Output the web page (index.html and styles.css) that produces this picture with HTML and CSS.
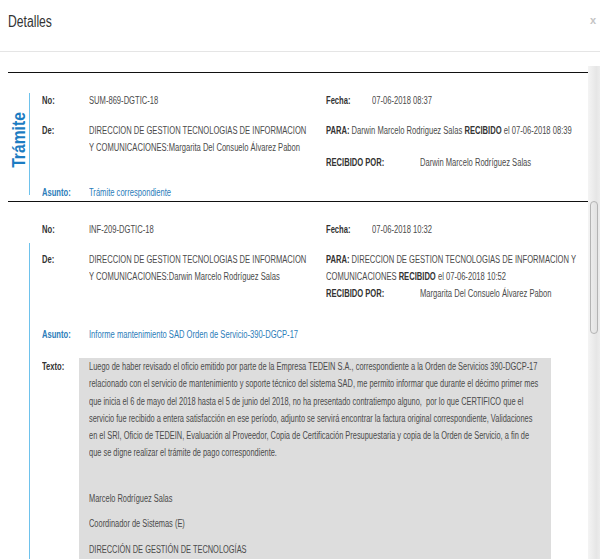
FILE: index.html
```html
<!DOCTYPE html>
<html lang="es">
<head>
<meta charset="utf-8">
<title>Detalles</title>
<link rel="stylesheet" href="styles.css">
</head>
<body>
<div class="modal">
  <header class="modal-header">
    <h4 class="modal-title">Detalles</h4>
    <button class="close" type="button">x</button>
  </header>
  <div class="modal-body">
    <div class="scroll-content">
      <section class="tramite tramite-first">
        <div class="side side-first"><span class="vlabel">Trámite</span></div>
        <div class="fields">
          <div class="cols">
            <div class="col-left">
              <div class="row"><span class="lbl">No:</span><span class="val">SUM-869-DGTIC-18</span></div>
              <div class="row"><span class="lbl">De:</span><span class="val">DIRECCION DE GESTION TECNOLOGIAS DE INFORMACION<br>Y COMUNICACIONES:Margarita Del Consuelo Álvarez Pabon</span></div>
            </div>
            <div class="col-right">
              <div class="row"><span class="lbl-r">Fecha:</span><span class="val">07-06-2018 08:37</span></div>
              <div class="row row-para"><span class="val"><b>PARA:</b> Darwin Marcelo Rodriguez Salas <b>RECIBIDO</b> el 07-06-2018 08:39</span></div>
              <div class="row"><span class="lbl-rp">RECIBIDO POR:</span><span class="val">Darwin Marcelo Rodríguez Salas</span></div>
            </div>
          </div>
          <div class="row asunto asunto-first"><span class="lbl">Asunto:</span><span class="val">Trámite correspondiente</span></div>
        </div>
      </section>
      <section class="tramite tramite-second">
        <div class="side side-second"></div>
        <div class="fields">
          <div class="cols">
            <div class="col-left">
              <div class="row"><span class="lbl">No:</span><span class="val">INF-209-DGTIC-18</span></div>
              <div class="row"><span class="lbl">De:</span><span class="val">DIRECCION DE GESTION TECNOLOGIAS DE INFORMACION<br>Y COMUNICACIONES:Darwin Marcelo Rodríguez Salas</span></div>
            </div>
            <div class="col-right">
              <div class="row"><span class="lbl-r">Fecha:</span><span class="val">07-06-2018 10:32</span></div>
              <div class="row row-para"><span class="val"><b>PARA:</b> DIRECCION DE GESTION TECNOLOGIAS DE INFORMACION Y<br>COMUNICACIONES <b>RECIBIDO</b> el 07-06-2018 10:52</span></div>
              <div class="row"><span class="lbl-rp">RECIBIDO POR:</span><span class="val">Margarita Del Consuelo Álvarez Pabon</span></div>
            </div>
          </div>
          <div class="row asunto asunto-second"><span class="lbl">Asunto:</span><span class="val">Informe mantenimiento SAD Orden de Servicio-390-DGCP-17</span></div>
          <div class="texto-row">
            <span class="lbl-t">Texto:</span>
            <div class="texto-box">
              <p class="p-main">Luego de haber revisado el oficio emitido por parte de la Empresa TEDEIN S.A., correspondiente a la Orden de Servicios 390-DGCP-17<br>relacionado con el servicio de mantenimiento y soporte técnico del sistema SAD, me permito informar que durante el décimo primer mes<br>que inicia el 6 de mayo del 2018 hasta el 5 de junio del 2018, no ha presentado contratiempo alguno,&nbsp; por lo que CERTIFICO que el<br>servicio fue recibido a entera satisfacción en ese período, adjunto se servirá encontrar la factura original correspondiente, Validaciones<br>en el SRI, Oficio de TEDEIN, Evaluación al Proveedor, Copia de Certificación Presupuestaria y copia de la Orden de Servicio, a fin de<br>que se digne realizar el trámite de pago correspondiente.</p>
              <p>Marcelo Rodríguez Salas</p>
              <p>Coordinador de Sistemas (E)</p>
              <p>DIRECCIÓN DE GESTIÓN DE TECNOLOGÍAS</p>
            </div>
          </div>
        </div>
      </section>
    </div>
    <div class="scrollbar"><div class="thumb"></div></div>
  </div>
</div>
</body>
</html>
```
FILE: styles.css
```css
html, body {
  margin: 0;
  height: 559px;
  overflow: hidden;
  background: #fff;
}
body {
  font-family: "Liberation Sans", Arial, Helvetica, sans-serif;
  font-size: 10px;
  color: #4b4b4b;
}
/* condensed text: the UI uses a narrow face, drawn here by squeezing Arial-metric text */
.modal-title,
.row > span,
.lbl-t,
.texto-box p {
  display: inline-block;
  transform: scaleX(0.76);
  transform-origin: 0 50%;
}
.texto-box p {
  display: block;
  transform: scaleX(0.743);
}
.modal {
  display: flex;
  flex-direction: column;
  height: 559px;
}
.modal-header {
  box-sizing: border-box;
  height: 52px;
  border-bottom: 1px solid #e5e5e5;
  display: flex;
  justify-content: space-between;
  align-items: flex-start;
  padding: 12px 4px 0 8px;
  flex: none;
}
.modal-title {
  margin: 0;
  font-size: 16px;
  line-height: 20px;
  font-weight: normal;
  color: #333;
}
.close {
  border: 0;
  background: none;
  padding: 0;
  margin-top: 2px;
  font-family: inherit;
  font-size: 11px;
  font-weight: bold;
  line-height: 12px;
  color: #c4c4c4;
  cursor: pointer;
}
.modal-body {
  flex: 1;
  min-height: 0;
  display: flex;
  padding-top: 14px;
  overflow: hidden;
}
.scroll-content {
  flex: 1;
  min-width: 0;
  padding: 6px 0 0 8px;
  overflow: hidden;
}
.scrollbar {
  width: 12px;
  flex: none;
  background: linear-gradient(to right, #f4f4f4, #e6e6e6 70%, #ececec);
}
.thumb {
  box-sizing: border-box;
  width: 8px;
  height: 133px;
  margin: 135px 0 0 2px;
  border: 1px solid #b4b4b4;
  border-radius: 4px;
  background: linear-gradient(to right, #ececec, #e2e2e2);
}
.tramite {
  display: flex;
  border-top: 1px solid #111;
}
.side {
  width: 21px;
  flex: none;
  border-right: 1px solid #6ec2ec;
  display: flex;
  align-items: center;
  justify-content: center;
}
.side-first {
  margin-top: 20px;
  height: 102px;
}
.side-second {
  margin-top: 41px;
}
.vlabel {
  writing-mode: vertical-rl;
  transform: rotate(180deg) scaleY(0.87);
  font-size: 18px;
  line-height: 18px;
  font-weight: bold;
  color: #1c7cc2;
  margin-bottom: 8px;
}
.fields {
  flex: 1;
  min-width: 0;
  padding: 19px 0 0 12px;
}
.cols {
  display: flex;
}
.col-left {
  width: 284px;
  flex: none;
}
.col-right {
  flex: 1;
  min-width: 0;
}
.row {
  display: flex;
  line-height: 17px;
  white-space: nowrap;
}
.col-left .row:first-child,
.col-right .row:first-child {
  margin-bottom: 13px;
}
.row-para {
  min-height: 32px;
}
.lbl {
  width: 47px;
  flex: none;
  font-weight: bold;
  color: #333;
}
.lbl-r {
  width: 46px;
  flex: none;
  font-weight: bold;
  color: #333;
}
.lbl-rp {
  width: 94px;
  flex: none;
  font-weight: bold;
  color: #333;
}
.val b {
  color: #333;
}
.asunto .lbl,
.asunto .val {
  color: #2b7cb9;
}
.asunto-first {
  margin-top: 13px;
}
.asunto-second {
  margin-top: 24px;
}
.texto-row {
  display: flex;
  margin-top: 15px;
}
.lbl-t {
  width: 37px;
  flex: none;
  line-height: 17px;
  font-weight: bold;
  color: #333;
}
.texto-box {
  width: 472px;
  flex: none;
  box-sizing: border-box;
  background: #dddddd;
  padding: 0 10px 20px;
  line-height: 17.3px;
  white-space: nowrap;
  overflow: hidden;
}
.texto-box p {
  margin: 0 0 8.2px;
}
.texto-box .p-main {
  margin-bottom: 28px;
}
```
